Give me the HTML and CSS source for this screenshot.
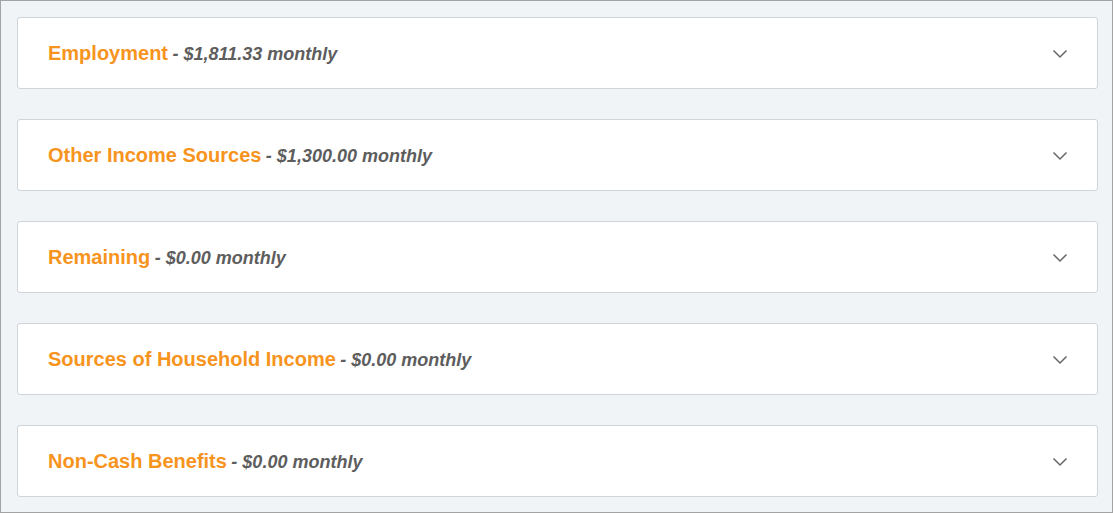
FILE: index.html
```html
<!DOCTYPE html>
<html>
<head>
<meta charset="utf-8">
<link rel="stylesheet" href="styles.css">
</head>
<body>
<div class="panel">
  <div class="card">
    <div class="head"><span class="title">Employment</span> <span class="amount">- $1,811.33 monthly</span></div>
    <svg class="chev" width="16" height="10" viewBox="0 0 16 10"><path d="M1.5 1.5 L8 8 L14.5 1.5" fill="none" stroke="#666" stroke-width="1.5"/></svg>
  </div>
  <div class="card">
    <div class="head"><span class="title">Other Income Sources</span> <span class="amount">- $1,300.00 monthly</span></div>
    <svg class="chev" width="16" height="10" viewBox="0 0 16 10"><path d="M1.5 1.5 L8 8 L14.5 1.5" fill="none" stroke="#666" stroke-width="1.5"/></svg>
  </div>
  <div class="card">
    <div class="head"><span class="title">Remaining</span> <span class="amount">- $0.00 monthly</span></div>
    <svg class="chev" width="16" height="10" viewBox="0 0 16 10"><path d="M1.5 1.5 L8 8 L14.5 1.5" fill="none" stroke="#666" stroke-width="1.5"/></svg>
  </div>
  <div class="card">
    <div class="head"><span class="title">Sources of Household Income</span> <span class="amount">- $0.00 monthly</span></div>
    <svg class="chev" width="16" height="10" viewBox="0 0 16 10"><path d="M1.5 1.5 L8 8 L14.5 1.5" fill="none" stroke="#666" stroke-width="1.5"/></svg>
  </div>
  <div class="card">
    <div class="head"><span class="title">Non-Cash Benefits</span> <span class="amount">- $0.00 monthly</span></div>
    <svg class="chev" width="16" height="10" viewBox="0 0 16 10"><path d="M1.5 1.5 L8 8 L14.5 1.5" fill="none" stroke="#666" stroke-width="1.5"/></svg>
  </div>
</div>
</body>
</html>
```
FILE: styles.css
```css
html, body {
  margin: 0;
  padding: 0;
}
body {
  font-family: "Liberation Sans", Arial, sans-serif;
}
.panel {
  box-sizing: border-box;
  width: 1113px;
  height: 513px;
  border: 1px solid #a3a3a3;
  background: #f0f4f7;
  padding: 16px 14px 15px 16px;
  display: flex;
  flex-direction: column;
  gap: 30px;
}
.card {
  box-sizing: border-box;
  height: 72px;
  background: #fff;
  border: 1px solid #cfd5da;
  border-radius: 3px;
  display: flex;
  align-items: center;
  justify-content: space-between;
  padding: 0 29px 0 30px;
}
.head {
  white-space: nowrap;
  padding-top: 1px;
}
.title {
  color: #f7941d;
  font-weight: bold;
  font-size: 20px;
}
.amount {
  color: #5d5d5d;
  font-weight: bold;
  font-style: italic;
  font-size: 18px;
}
.chev {
  display: block;
  margin-top: 2px;
}
```
